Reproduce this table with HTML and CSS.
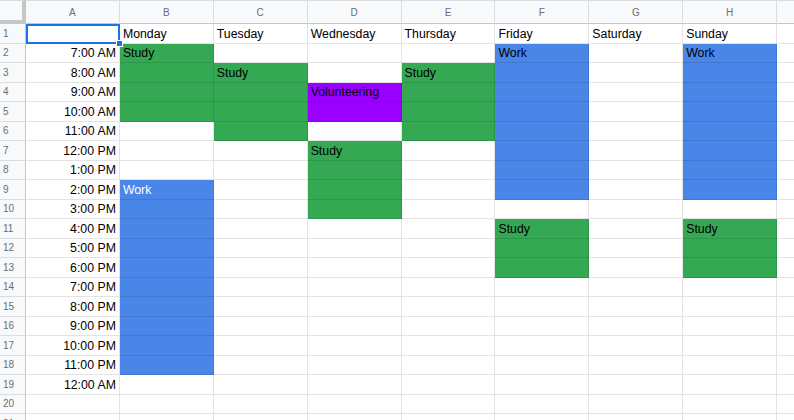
FILE: index.html
```html
<!DOCTYPE html>
<html>
<head>
<meta charset="utf-8">
<link rel="stylesheet" href="styles.css">
</head>
<body>
<div class="sheet">
  <div class="corner"></div><div class="ch">A</div><div class="ch">B</div><div class="ch">C</div><div class="ch">D</div><div class="ch">E</div><div class="ch">F</div><div class="ch">G</div><div class="ch">H</div><div class="ch"></div>

  <div class="rh">1</div><div class="c sel"><span class="handle"></span></div><div class="c">Monday</div><div class="c">Tuesday</div><div class="c">Wednesday</div><div class="c">Thursday</div><div class="c">Friday</div><div class="c">Saturday</div><div class="c">Sunday</div><div class="c"></div>

  <div class="rh">2</div><div class="c r">7:00 AM</div><div class="c g">Study</div><div class="c"></div><div class="c"></div><div class="c"></div><div class="c b">Work</div><div class="c"></div><div class="c b">Work</div><div class="c"></div>

  <div class="rh">3</div><div class="c r">8:00 AM</div><div class="c g"></div><div class="c g">Study</div><div class="c"></div><div class="c g">Study</div><div class="c b"></div><div class="c"></div><div class="c b"></div><div class="c"></div>

  <div class="rh">4</div><div class="c r">9:00 AM</div><div class="c g"></div><div class="c g"></div><div class="c p">Volunteering</div><div class="c g"></div><div class="c b"></div><div class="c"></div><div class="c b"></div><div class="c"></div>

  <div class="rh">5</div><div class="c r">10:00 AM</div><div class="c g"></div><div class="c g"></div><div class="c p"></div><div class="c g"></div><div class="c b"></div><div class="c"></div><div class="c b"></div><div class="c"></div>

  <div class="rh">6</div><div class="c r">11:00 AM</div><div class="c"></div><div class="c g"></div><div class="c"></div><div class="c g"></div><div class="c b"></div><div class="c"></div><div class="c b"></div><div class="c"></div>

  <div class="rh">7</div><div class="c r">12:00 PM</div><div class="c"></div><div class="c"></div><div class="c g">Study</div><div class="c"></div><div class="c b"></div><div class="c"></div><div class="c b"></div><div class="c"></div>

  <div class="rh">8</div><div class="c r">1:00 PM</div><div class="c"></div><div class="c"></div><div class="c g"></div><div class="c"></div><div class="c b"></div><div class="c"></div><div class="c b"></div><div class="c"></div>

  <div class="rh">9</div><div class="c r">2:00 PM</div><div class="c b w">Work</div><div class="c"></div><div class="c g"></div><div class="c"></div><div class="c b"></div><div class="c"></div><div class="c b"></div><div class="c"></div>

  <div class="rh">10</div><div class="c r">3:00 PM</div><div class="c b"></div><div class="c"></div><div class="c g"></div><div class="c"></div><div class="c"></div><div class="c"></div><div class="c"></div><div class="c"></div>

  <div class="rh">11</div><div class="c r">4:00 PM</div><div class="c b"></div><div class="c"></div><div class="c"></div><div class="c"></div><div class="c g">Study</div><div class="c"></div><div class="c g">Study</div><div class="c"></div>

  <div class="rh">12</div><div class="c r">5:00 PM</div><div class="c b"></div><div class="c"></div><div class="c"></div><div class="c"></div><div class="c g"></div><div class="c"></div><div class="c g"></div><div class="c"></div>

  <div class="rh">13</div><div class="c r">6:00 PM</div><div class="c b"></div><div class="c"></div><div class="c"></div><div class="c"></div><div class="c g"></div><div class="c"></div><div class="c g"></div><div class="c"></div>

  <div class="rh">14</div><div class="c r">7:00 PM</div><div class="c b"></div><div class="c"></div><div class="c"></div><div class="c"></div><div class="c"></div><div class="c"></div><div class="c"></div><div class="c"></div>

  <div class="rh">15</div><div class="c r">8:00 PM</div><div class="c b"></div><div class="c"></div><div class="c"></div><div class="c"></div><div class="c"></div><div class="c"></div><div class="c"></div><div class="c"></div>

  <div class="rh">16</div><div class="c r">9:00 PM</div><div class="c b"></div><div class="c"></div><div class="c"></div><div class="c"></div><div class="c"></div><div class="c"></div><div class="c"></div><div class="c"></div>

  <div class="rh">17</div><div class="c r">10:00 PM</div><div class="c b"></div><div class="c"></div><div class="c"></div><div class="c"></div><div class="c"></div><div class="c"></div><div class="c"></div><div class="c"></div>

  <div class="rh">18</div><div class="c r">11:00 PM</div><div class="c b"></div><div class="c"></div><div class="c"></div><div class="c"></div><div class="c"></div><div class="c"></div><div class="c"></div><div class="c"></div>

  <div class="rh">19</div><div class="c r">12:00 AM</div><div class="c"></div><div class="c"></div><div class="c"></div><div class="c"></div><div class="c"></div><div class="c"></div><div class="c"></div><div class="c"></div>

  <div class="rh">20</div><div class="c"></div><div class="c"></div><div class="c"></div><div class="c"></div><div class="c"></div><div class="c"></div><div class="c"></div><div class="c"></div><div class="c"></div>

  <div class="rh">21</div><div class="c"></div><div class="c"></div><div class="c"></div><div class="c"></div><div class="c"></div><div class="c"></div><div class="c"></div><div class="c"></div><div class="c"></div>
</div>
</body>
</html>
```

FILE: styles.css
```css
html, body {
  margin: 0;
  padding: 0;
  background: #ffffff;
  overflow: hidden;
}

.sheet {
  display: grid;
  grid-template-columns: 26px repeat(8, 93.9px) 40px;
  grid-template-rows: 24px repeat(21, 19.5px);
  font-family: "Liberation Sans", Arial, sans-serif;
  width: 794px;
}

.corner {
  background: #f8f9fa;
  border-top: 1px solid #dadce0;
  border-right: 4px solid #c4c7c5;
  border-bottom: 4px solid #c4c7c5;
  box-sizing: border-box;
}

.ch {
  background: #f8f9fa;
  border-top: 1px solid #dadce0;
  border-right: 1px solid #dadce0;
  border-bottom: 1px solid #c4c7c5;
  box-sizing: border-box;
  display: flex;
  align-items: center;
  justify-content: center;
  font-size: 10px;
  color: #6b6f73;
}

.rh {
  background: #f8f9fa;
  border-right: 1px solid #c4c7c5;
  border-bottom: 1px solid #dadce0;
  box-sizing: border-box;
  display: flex;
  align-items: center;
  padding-left: 3px;
  font-size: 10px;
  color: #6b6f73;
}

.c {
  border-right: 1px solid rgba(0, 0, 0, 0.11);
  border-bottom: 1px solid rgba(0, 0, 0, 0.11);
  box-sizing: border-box;
  display: flex;
  align-items: flex-end;
  padding: 0 3px 1px 3px;
  font-size: 12.3px;
  line-height: 15px;
  color: #000000;
  white-space: nowrap;
  overflow: hidden;
}

.r {
  justify-content: flex-end;
}

.g { background-color: #34a853; }
.b { background-color: #4a86e8; }
.p { background-color: #9900ff; }
.w { color: #ffffff; }

.sel {
  position: relative;
  overflow: visible;
  border: 2px solid #1a73e8;
}

.handle {
  position: absolute;
  right: -5px;
  bottom: -5px;
  width: 5px;
  height: 5px;
  background: #1a73e8;
  border: 1px solid #ffffff;
  z-index: 2;
}
```
